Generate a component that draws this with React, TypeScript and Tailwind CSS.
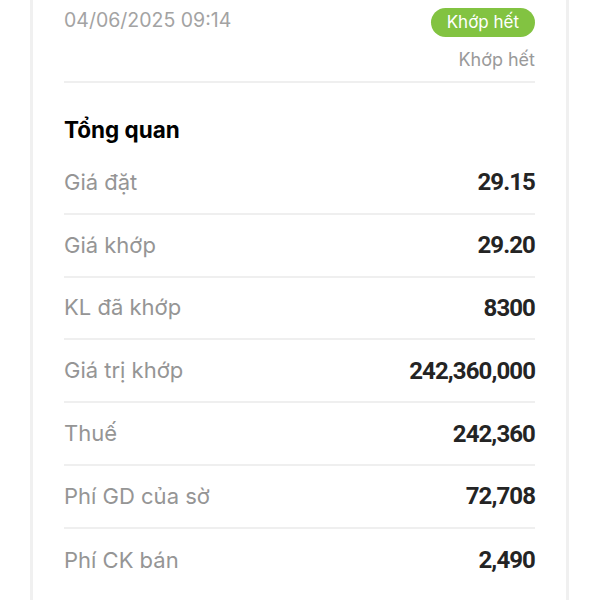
const rows = [
    {label: 'Giá đặt', value: '29.15'},
    {label: 'Giá khớp', value: '29.20'},
    {label: 'KL đã khớp', value: '8300'},
    {label: 'Giá trị khớp', value: '242,360,000'},
    {label: 'Thuế', value: '242,360'},
    {label: 'Phí GD của sờ', value: '72,708'},
    {label: 'Phí CK bán', value: '2,490'},
];

export default function App() {
    return (
        <div className="w-[600px] h-[600px] overflow-hidden bg-white font-['Inter','Noto_Sans',sans-serif]">
            <div className="ml-[30px] w-[539px] h-[600px] bg-white border-x-[3px] border-[#f0f0f0] px-[31px]">
                <div className="flex justify-between items-start pt-[8px] pb-[10px] border-b-2 border-[#efefef]">
                    <span className="text-[19.5px] leading-[24px] text-[#a3a3a3]">04/06/2025 09:14</span>
                    <div className="flex flex-col items-end">
                        <span className="h-[29px] px-[16px] rounded-full bg-[#82c341] text-white text-[17px] leading-[29px]">
                            Khớp hết
                        </span>
                        <span className="mt-[12px] text-[18px] leading-[22px] text-[#9a9a9a]">Khớp hết</span>
                    </div>
                </div>
                <div className="h-[69px] pt-[33px]">
                    <h2 className="text-[22.5px] leading-[28px] font-bold text-black">Tổng quan</h2>
                </div>
                {rows.map((r, i) => (
                    <div key={r.label}
                         className={"h-[62.8px] flex items-center justify-between " + (i < rows.length - 1 ? "border-b-2 border-[#efefef]" : "")}>
                        <span className="text-[22px] text-[#959595]">{r.label}</span>
                        <span className="text-[24px] font-bold text-[#242424] tracking-[-0.9px] font-['Roboto',sans-serif]">{r.value}</span>
                    </div>
                ))}
            </div>
        </div>
    )
}
